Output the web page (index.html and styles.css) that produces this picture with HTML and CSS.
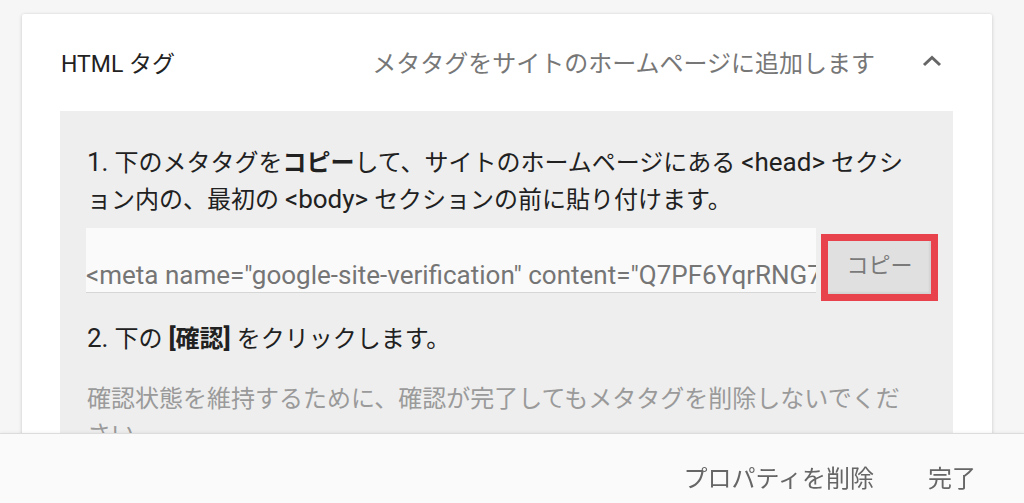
FILE: index.html
```html
<!DOCTYPE html>
<html lang="ja">
<head>
<meta charset="utf-8">
<title>HTML タグ</title>
<link rel="stylesheet" href="styles.css">
</head>
<body>
<div class="card">
  <div class="card-header">
    <div class="title">HTML タグ</div>
    <div class="desc">メタタグをサイトのホームページに追加します</div>
    <svg class="chevron" width="20" height="12" viewBox="0 0 20 12"><path d="M2 10 L10 2.5 L18 10" fill="none" stroke="#666" stroke-width="3"/></svg>
  </div>
  <div class="panel">
    <p class="step"><span class="en">1.</span> 下のメタタグを<b>コピー</b>して、サイトのホームページにある <span class="en">&lt;head&gt;</span> セクション内の、最初の <span class="en">&lt;body&gt;</span> セクションの前に貼り付けます。</p>
    <div class="code-row">
      <div class="code-field"><span>&lt;meta name="google-site-verification" content="Q7PF6YqrRNG7uXk2mVb9TzLh4cWdPsA8eRjN3yQo1fE" /&gt;</span></div>
      <div class="highlight"><button class="copy-btn">コピー</button></div>
    </div>
    <p class="step step2"><span class="en">2.</span> 下の <b><span class="en">[</span>確認<span class="en">]</span></b> をクリックします。</p>
    <p class="note">確認状態を維持するために、確認が完了してもメタタグを削除しないでください。</p>
  </div>
</div>
<div class="footer">
  <button class="footer-btn">プロパティを削除</button>
  <button class="footer-btn">完了</button>
</div>
</body>
</html>
```

FILE: styles.css
```css
html, body {
  margin: 0;
  padding: 0;
}
body {
  background: #f6f6f6;
  font-family: Roboto, "Noto Sans CJK JP", sans-serif;
  height: 503px;
  overflow: hidden;
}
.card {
  margin: 14px 0 0 22px;
  width: 970px;
  height: 600px;
  background: #fff;
  box-shadow: 0 1px 4px rgba(0,0,0,0.14), 0 0 2px rgba(0,0,0,0.08);
  border-radius: 2px;
}
.card-header {
  height: 97px;
  display: flex;
  align-items: center;
  padding: 0 50px 0 39px;
  box-sizing: border-box;
}
.title {
  font-size: 23px;
  color: #222;
  flex: 1;
  padding-bottom: 2px;
}
.desc {
  font-size: 24px;
  color: #777;
  margin-right: 47px;
  padding-bottom: 2px;
}
.chevron {
  display: block;
  margin-bottom: 4px;
}
.panel {
  margin: 0 39px 0 38px;
  background: #eeeeee;
  padding: 33px 35px 40px 27px;
}
.step {
  margin: 0;
  font-size: 24px;
  line-height: 36px;
  color: #212121;
}
.en {
  font-size: 26px;
}
.step b {
  font-weight: 700;
}
.code-row {
  display: flex;
  align-items: flex-start;
  margin-top: 10px;
  margin-left: -1px;
}
.code-field {
  flex: 0 0 730px;
  width: 730px;
  height: 65px;
  box-sizing: border-box;
  background: #fafafa;
  border-bottom: 1px solid #d6d6d6;
  overflow: hidden;
  white-space: nowrap;
  display: flex;
  align-items: flex-end;
  padding-bottom: 2px;
  font-size: 26px;
  color: #757575;
}
.highlight {
  flex: 0 0 auto;
  margin: 6px 0 0 5px;
  border: 7px solid #e8424d;
  display: flex;
}
.copy-btn {
  width: 103px;
  height: 53px;
  border: none;
  background: #e0e0e0;
  box-shadow: inset -2px -2px 2px rgba(0,0,0,0.06);
  font-family: Roboto, "Noto Sans CJK JP", sans-serif;
  font-size: 22px;
  color: #7a7a7a;
  padding: 0 0 10px 0;
}
.step2 {
  margin-top: 19px;
}
.note {
  margin: 24px 0 0 0;
  font-size: 24px;
  line-height: 36px;
  color: #9a9a9a;
}
.footer {
  position: fixed;
  left: 0;
  right: 0;
  bottom: 0;
  height: 69px;
  background: #fafafa;
  border-top: 1px solid #dcdcdc;
  box-shadow: 0 -1px 3px rgba(0,0,0,0.05);
  display: flex;
  justify-content: flex-end;
  align-items: center;
  gap: 54px;
  padding-right: 48px;
}
.footer-btn {
  background: none;
  border: none;
  padding: 0;
  font-family: Roboto, "Noto Sans CJK JP", sans-serif;
  font-size: 24px;
  color: #666;
  margin-top: 16px;
}
```
